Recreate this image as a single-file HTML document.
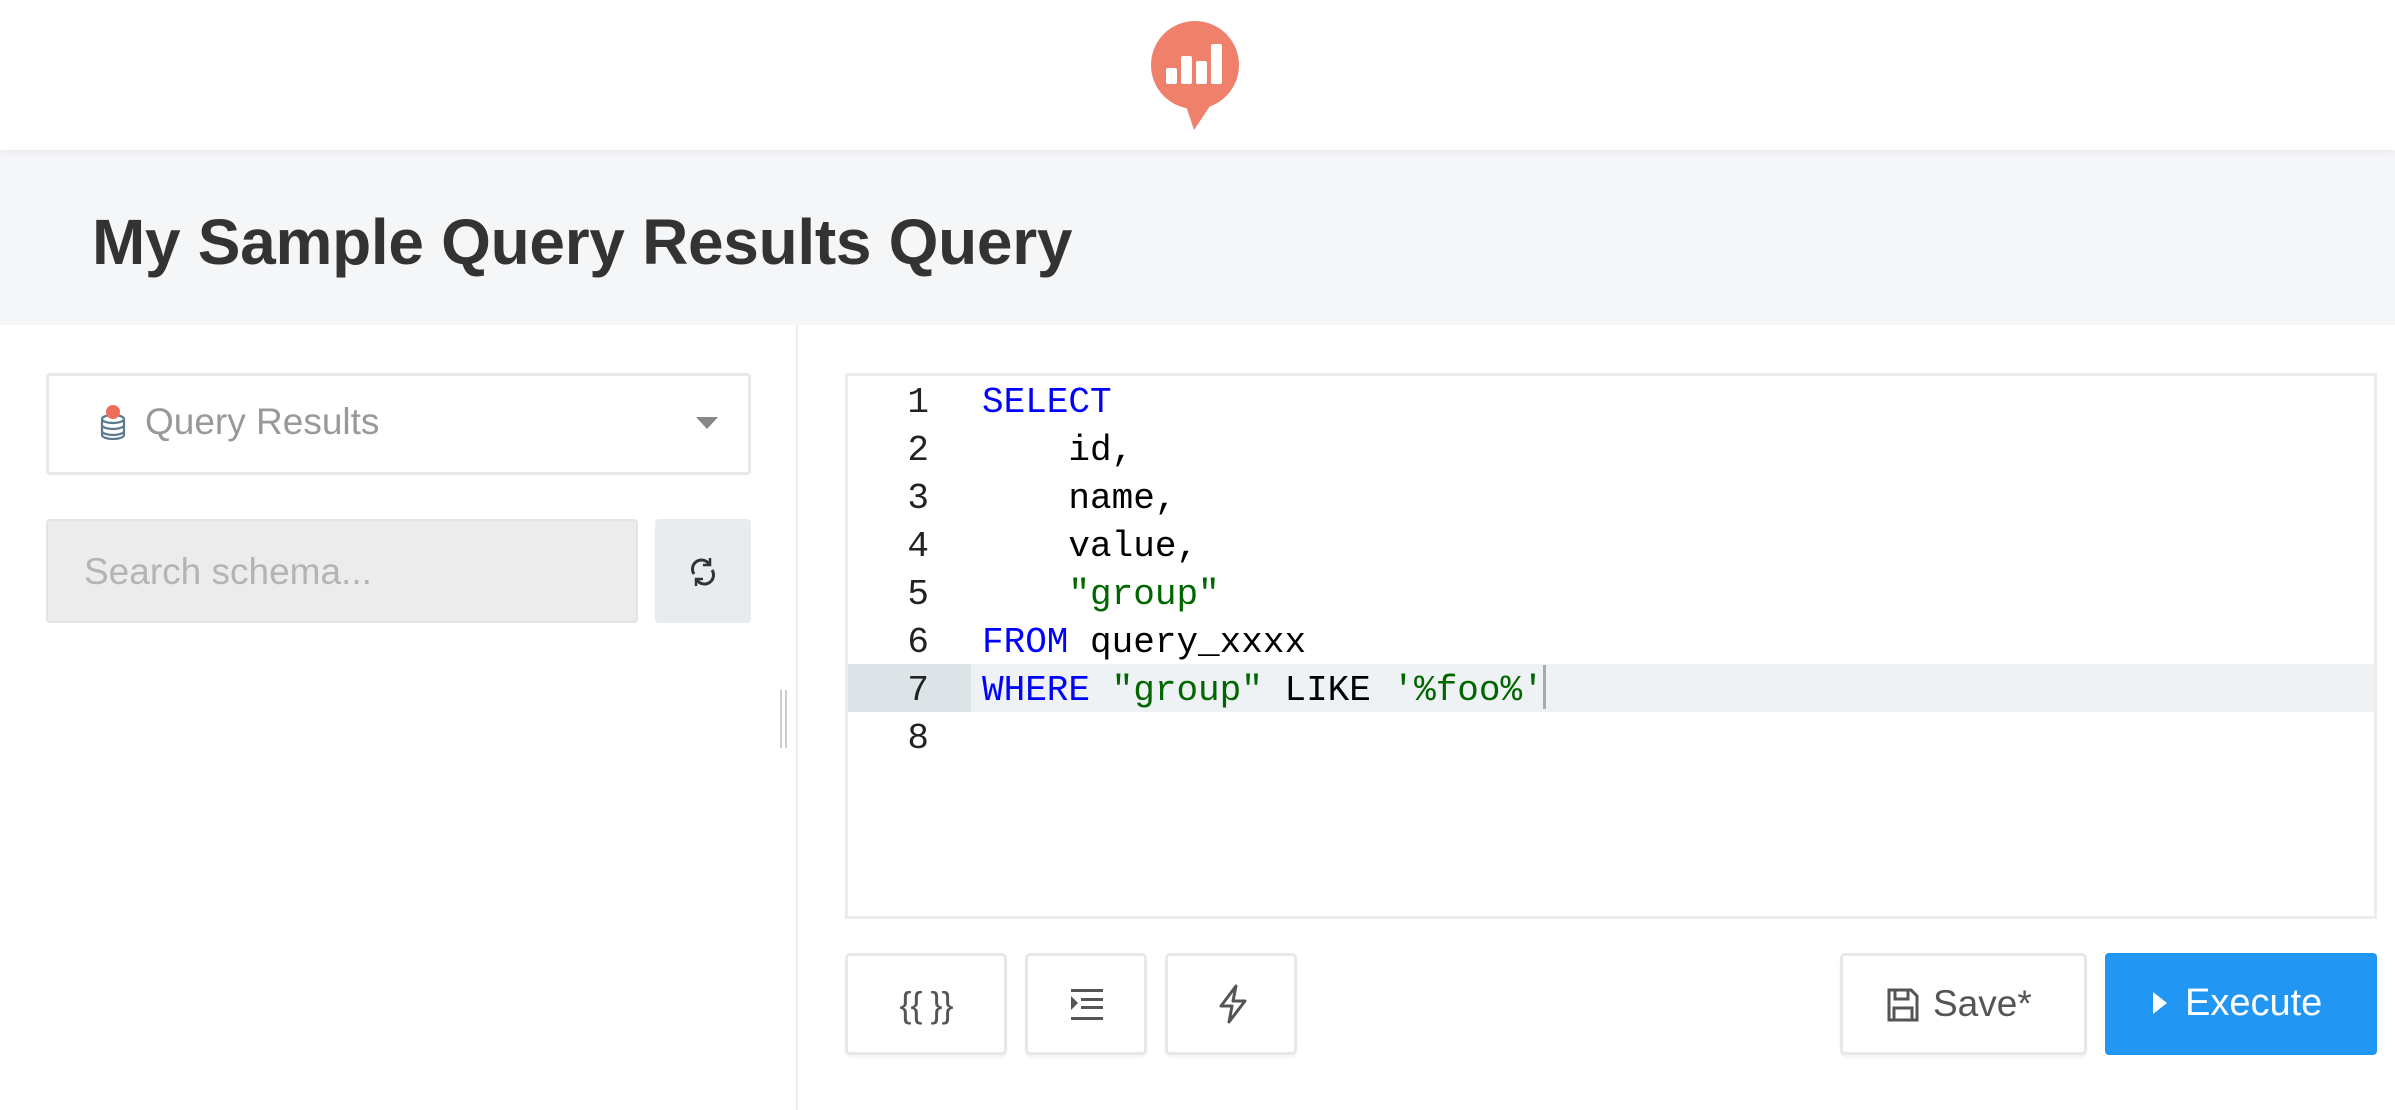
<!DOCTYPE html>
<html><head><meta charset="utf-8"><style>
*{box-sizing:border-box;margin:0;padding:0}
body{width:2395px;height:1110px;overflow:hidden;background:#fff;font-family:"Liberation Sans",sans-serif;position:relative}
.abs{position:absolute}
.hdr{left:0;top:0;width:2395px;height:150px;background:#fff;box-shadow:0 2px 8px rgba(0,0,0,.06);z-index:2}
.band{left:0;top:150px;width:2395px;height:175px;background:#f5f6f8}
.title{left:92px;top:205px;font-size:64px;color:#333;font-weight:bold;letter-spacing:-0.3px}
.vdiv{left:796px;top:325px;width:2px;height:785px;background:#eceef0}
.dd{left:46px;top:373px;width:705px;height:102px;border:3px solid #e8e8e8;border-radius:4px}
.ddtxt{left:145px;top:401px;font-size:37px;color:#999}
.search{left:46px;top:519px;width:592px;height:104px;background:#ececec;border:2px solid #e4e4e4;border-radius:4px;font-size:37px;color:#b4b4b4;padding:30px 36px}
.refresh{left:655px;top:519px;width:96px;height:104px;background:#e8ecef;border-radius:4px}
.ed{left:845px;top:373px;width:1532px;height:546px;border:3px solid #ececec}
.code{font-family:"Liberation Mono",monospace;font-size:36px;line-height:48px}
.ln{position:absolute;left:0;width:123px;text-align:right;padding-right:42px;color:#222}
.cl{position:absolute;left:134px;white-space:pre;color:#000}
.k{color:#0000ff}.s{color:#006600}
.btn{border:3px solid #e8e8e8;border-radius:5px;background:#fff;box-shadow:0 3px 2px rgba(0,0,0,.04)}
</style></head><body>
<div class="abs hdr">
<svg class="abs" style="left:1150px;top:20px" width="92" height="112" viewBox="0 0 92 112">
<circle cx="45" cy="45" r="44" fill="#ef806b"/>
<path d="M34 80 L44 110 L68 74 Z" fill="#ef806b"/>
<rect x="16" y="48" width="11" height="16" rx="2" fill="#fff"/>
<rect x="31" y="36" width="11" height="28" rx="2" fill="#fff"/>
<rect x="46" y="41" width="11" height="23" rx="2" fill="#fff"/>
<rect x="61" y="24" width="11" height="40" rx="2" fill="#fff"/>
</svg>
</div>
<div class="abs band"></div>
<div class="abs title">My Sample Query Results Query</div>
<div class="abs vdiv"></div>
<div class="abs" style="left:780px;top:690px;width:2px;height:58px;background:#ccc"></div>
<div class="abs" style="left:785px;top:690px;width:2px;height:58px;background:#ccc"></div>

<div class="abs dd"></div>
<svg class="abs" style="left:98px;top:404px" width="30" height="36" viewBox="0 0 30 36">
<g fill="none" stroke="#5b7a8c" stroke-width="2.2"><ellipse cx="15" cy="15" rx="11" ry="4"/><path d="M4 15v16c0 2.2 5 4 11 4s11-1.8 11-4V15M4 21c0 2.2 5 4 11 4s11-1.8 11-4M4 27c0 2.2 5 4 11 4s11-1.8 11-4"/></g>
<circle cx="15" cy="8" r="7" fill="#ef6e5b"/></svg>
<div class="abs ddtxt">Query Results</div>
<svg class="abs" style="left:696px;top:417px" width="22" height="14"><path d="M0 0H22L11 12Z" fill="#888"/></svg>

<div class="abs search">Search schema...</div>
<div class="abs refresh"><svg class="abs" style="left:34px;top:37px" width="28" height="32" viewBox="0 0 28 32" fill="none" stroke="#333" stroke-width="3"><path d="M5 18a9 9 0 0 1 15-10"/><path d="M23 14a9 9 0 0 1-15 10"/><path d="M21 2v7h-7" stroke-width="2.5"/><path d="M7 30v-7h7" stroke-width="2.5"/></svg></div>

<div class="abs ed code">
<div class="abs" style="left:0;top:288px;width:1526px;height:48px;background:#eef2f5"></div>
<div class="abs" style="left:0;top:288px;width:123px;height:48px;background:#dde4e8"></div>
<div class="abs" style="top:0;left:0;width:1526px;height:540px">
<div style="position:absolute;top:3px;left:0;width:100%">
<div class="ln" style="top:0">1</div><div class="cl" style="top:0"><span class="k">SELECT</span></div>
<div class="ln" style="top:48px">2</div><div class="cl" style="top:48px">    id,</div>
<div class="ln" style="top:96px">3</div><div class="cl" style="top:96px">    name,</div>
<div class="ln" style="top:144px">4</div><div class="cl" style="top:144px">    value,</div>
<div class="ln" style="top:192px">5</div><div class="cl" style="top:192px">    <span class="s">"group"</span></div>
<div class="ln" style="top:240px">6</div><div class="cl" style="top:240px"><span class="k">FROM</span> query_xxxx</div>
<div class="ln" style="top:288px">7</div><div class="cl" style="top:288px"><span class="k">WHERE</span> <span class="s">"group"</span> LIKE <span class="s">'%foo%'</span></div>
<div class="ln" style="top:336px">8</div>
</div>
<div class="abs" style="left:695px;top:289px;width:3px;height:44px;background:#aaa"></div>
</div>
</div>

<div class="abs btn" style="left:845px;top:953px;width:162px;height:102px"><div class="abs" style="left:0;width:156px;top:28px;text-align:center;font-size:36px;color:#555;font-family:'Liberation Sans',sans-serif;letter-spacing:-1px">{{ }}</div></div>
<div class="abs btn" style="left:1025px;top:953px;width:122px;height:102px"><svg class="abs" style="left:43px;top:33px" width="32" height="32" viewBox="0 0 32 32" fill="#555"><rect x="0" y="0" width="32" height="3"/><rect x="10" y="9" width="22" height="3"/><rect x="10" y="17" width="22" height="3"/><rect x="0" y="28" width="32" height="3"/><path d="M0 7L7 14L0 21Z"/></svg></div>
<div class="abs btn" style="left:1165px;top:953px;width:132px;height:102px"><svg class="abs" style="left:50px;top:28px" width="30" height="40" viewBox="0 0 30 40" fill="none" stroke="#555" stroke-width="3" stroke-linejoin="round"><path d="M18 2L3 22h11l-3 16L27 17H15z"/></svg></div>

<div class="abs btn" style="left:1840px;top:953px;width:247px;height:102px"><svg class="abs" style="left:44px;top:32px" width="32" height="34" viewBox="0 0 32 34" fill="none" stroke="#555" stroke-width="3"><path d="M2 2h22l6 6v24H2z"/><path d="M8 2v9h13V2M7 32V20h18v12"/></svg><div class="abs" style="left:90px;top:27px;font-size:37px;color:#555">Save*</div></div>
<div class="abs" style="left:2105px;top:953px;width:272px;height:102px;background:#2196f3;border-radius:4px"><svg class="abs" style="left:48px;top:39px" width="14" height="22"><path d="M0 0L14 11L0 22Z" fill="#fff"/></svg><div class="abs" style="left:80px;top:29px;font-size:38px;color:#fff">Execute</div></div>
</body></html>
